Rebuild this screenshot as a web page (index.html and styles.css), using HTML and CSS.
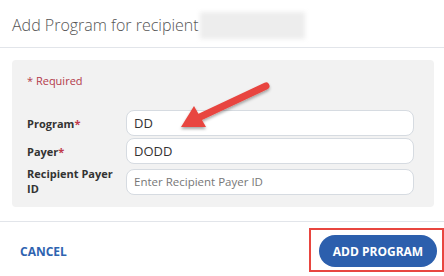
FILE: index.html
```html
<!DOCTYPE html>
<html lang="en">
<head>
    <meta charset="UTF-8">
    <title>Add Program</title>
    <link rel="stylesheet" href="styles.css">
</head>
<body>
    <div class="modal">
        <div class="modal-header">
            <span class="title">Add Program for recipient</span>
            <span class="blurred"></span>
        </div>
        <div class="modal-body">
            <div class="panel">
                <div class="required">* Required</div>
                <div class="form-row">
                    <label>Program<span class="star">*</span></label>
                    <input type="text" value="DD">
                </div>
                <div class="form-row">
                    <label>Payer<span class="star">*</span></label>
                    <input type="text" value="DODD">
                </div>
                <div class="form-row">
                    <label>Recipient Payer ID</label>
                    <input type="text" placeholder="Enter Recipient Payer ID">
                </div>
            </div>
        </div>
        <div class="modal-footer">
            <button class="btn-link">CANCEL</button>
            <button class="btn-primary">ADD PROGRAM</button>
        </div>

        <svg class="arrow" width="444" height="276" viewBox="0 0 444 276">
            <defs>
                <filter id="shadow" x="-20%" y="-20%" width="140%" height="140%">
                    <feDropShadow dx="0" dy="2" stdDeviation="1.5" flood-color="#000" flood-opacity="0.35"/>
                </filter>
            </defs>
            <g filter="url(#shadow)" fill="#e8453f">
                <line x1="266" y1="86" x2="200" y2="117" stroke="#e8453f" stroke-width="7" stroke-linecap="round"/>
                <polygon points="181,127 194,106 206,127"/>
            </g>
        </svg>
        <div class="highlight"></div>
    </div>
</body>
</html>
```

FILE: styles.css
```css
body {
    margin: 0;
    font-family: "Open Sans", "Liberation Sans", sans-serif;
    background: #fff;
}
.modal {
    position: relative;
    width: 444px;
    height: 276px;
    background: #fff;
    overflow: hidden;
}
.modal-header {
    height: 48px;
    border-bottom: 1px solid #e2e5ea;
    display: flex;
    align-items: center;
    padding-left: 12px;
    padding-top: 3px;
    box-sizing: border-box;
}
.title {
    font-size: 16px;
    color: #555;
    font-weight: 300;
}
.blurred {
    width: 105px;
    height: 27px;
    margin-left: 1px;
    background: #ededed;
    filter: blur(2px);
}
.modal-body {
    padding: 12px 10px 12px 12px;
}
.panel {
    background: #f2f2f2;
    border-radius: 4px;
    height: 147px;
    padding: 13px 20px 0 15px;
    box-sizing: border-box;
}
.required {
    color: #b23a4b;
    font-size: 11px;
    margin-bottom: 22px;
}
.form-row {
    display: flex;
    align-items: center;
    margin-bottom: 2px;
}
.form-row label {
    width: 99px;
    font-size: 11px;
    font-weight: 700;
    color: #333;
    line-height: 15px;
    padding-right: 2px;
    box-sizing: border-box;
}
.star {
    color: #c0394b;
}
.form-row input {
    flex: 1;
    height: 26px;
    box-sizing: border-box;
    border: 1px solid #d6dbe1;
    border-radius: 8px;
    background: #fff;
    padding: 0 7px;
    font-family: "Open Sans", "Liberation Sans", sans-serif;
    font-size: 13px;
    color: #333;
    outline: none;
}
.form-row:last-child input {
    margin-top: 1px;
    font-size: 11.5px;
}
.form-row input::placeholder {
    color: #777;
}
.modal-footer {
    position: absolute;
    left: 0;
    right: 0;
    top: 221px;
    bottom: 0;
    border-top: 1px solid #e2e5ea;
    display: flex;
    align-items: center;
    justify-content: space-between;
    padding: 0 7px 0 20px;
}
.btn-link {
    background: none;
    border: none;
    padding: 0;
    font-family: "Open Sans", "Liberation Sans", sans-serif;
    font-weight: 700;
    font-size: 12px;
    color: #2e63b0;
    margin-top: 4px;
}
.btn-primary {
    background: #2c5fad;
    color: #fff;
    border: none;
    border-radius: 16px;
    height: 32px;
    width: 118px;
    font-family: "Open Sans", "Liberation Sans", sans-serif;
    font-weight: 700;
    font-size: 12px;
    margin-top: 4px;
}
.arrow {
    position: absolute;
    left: 0;
    top: 0;
    pointer-events: none;
}
.highlight {
    position: absolute;
    left: 309px;
    top: 228px;
    width: 131px;
    height: 40px;
    border: 2px solid #e8453f;
}
```
